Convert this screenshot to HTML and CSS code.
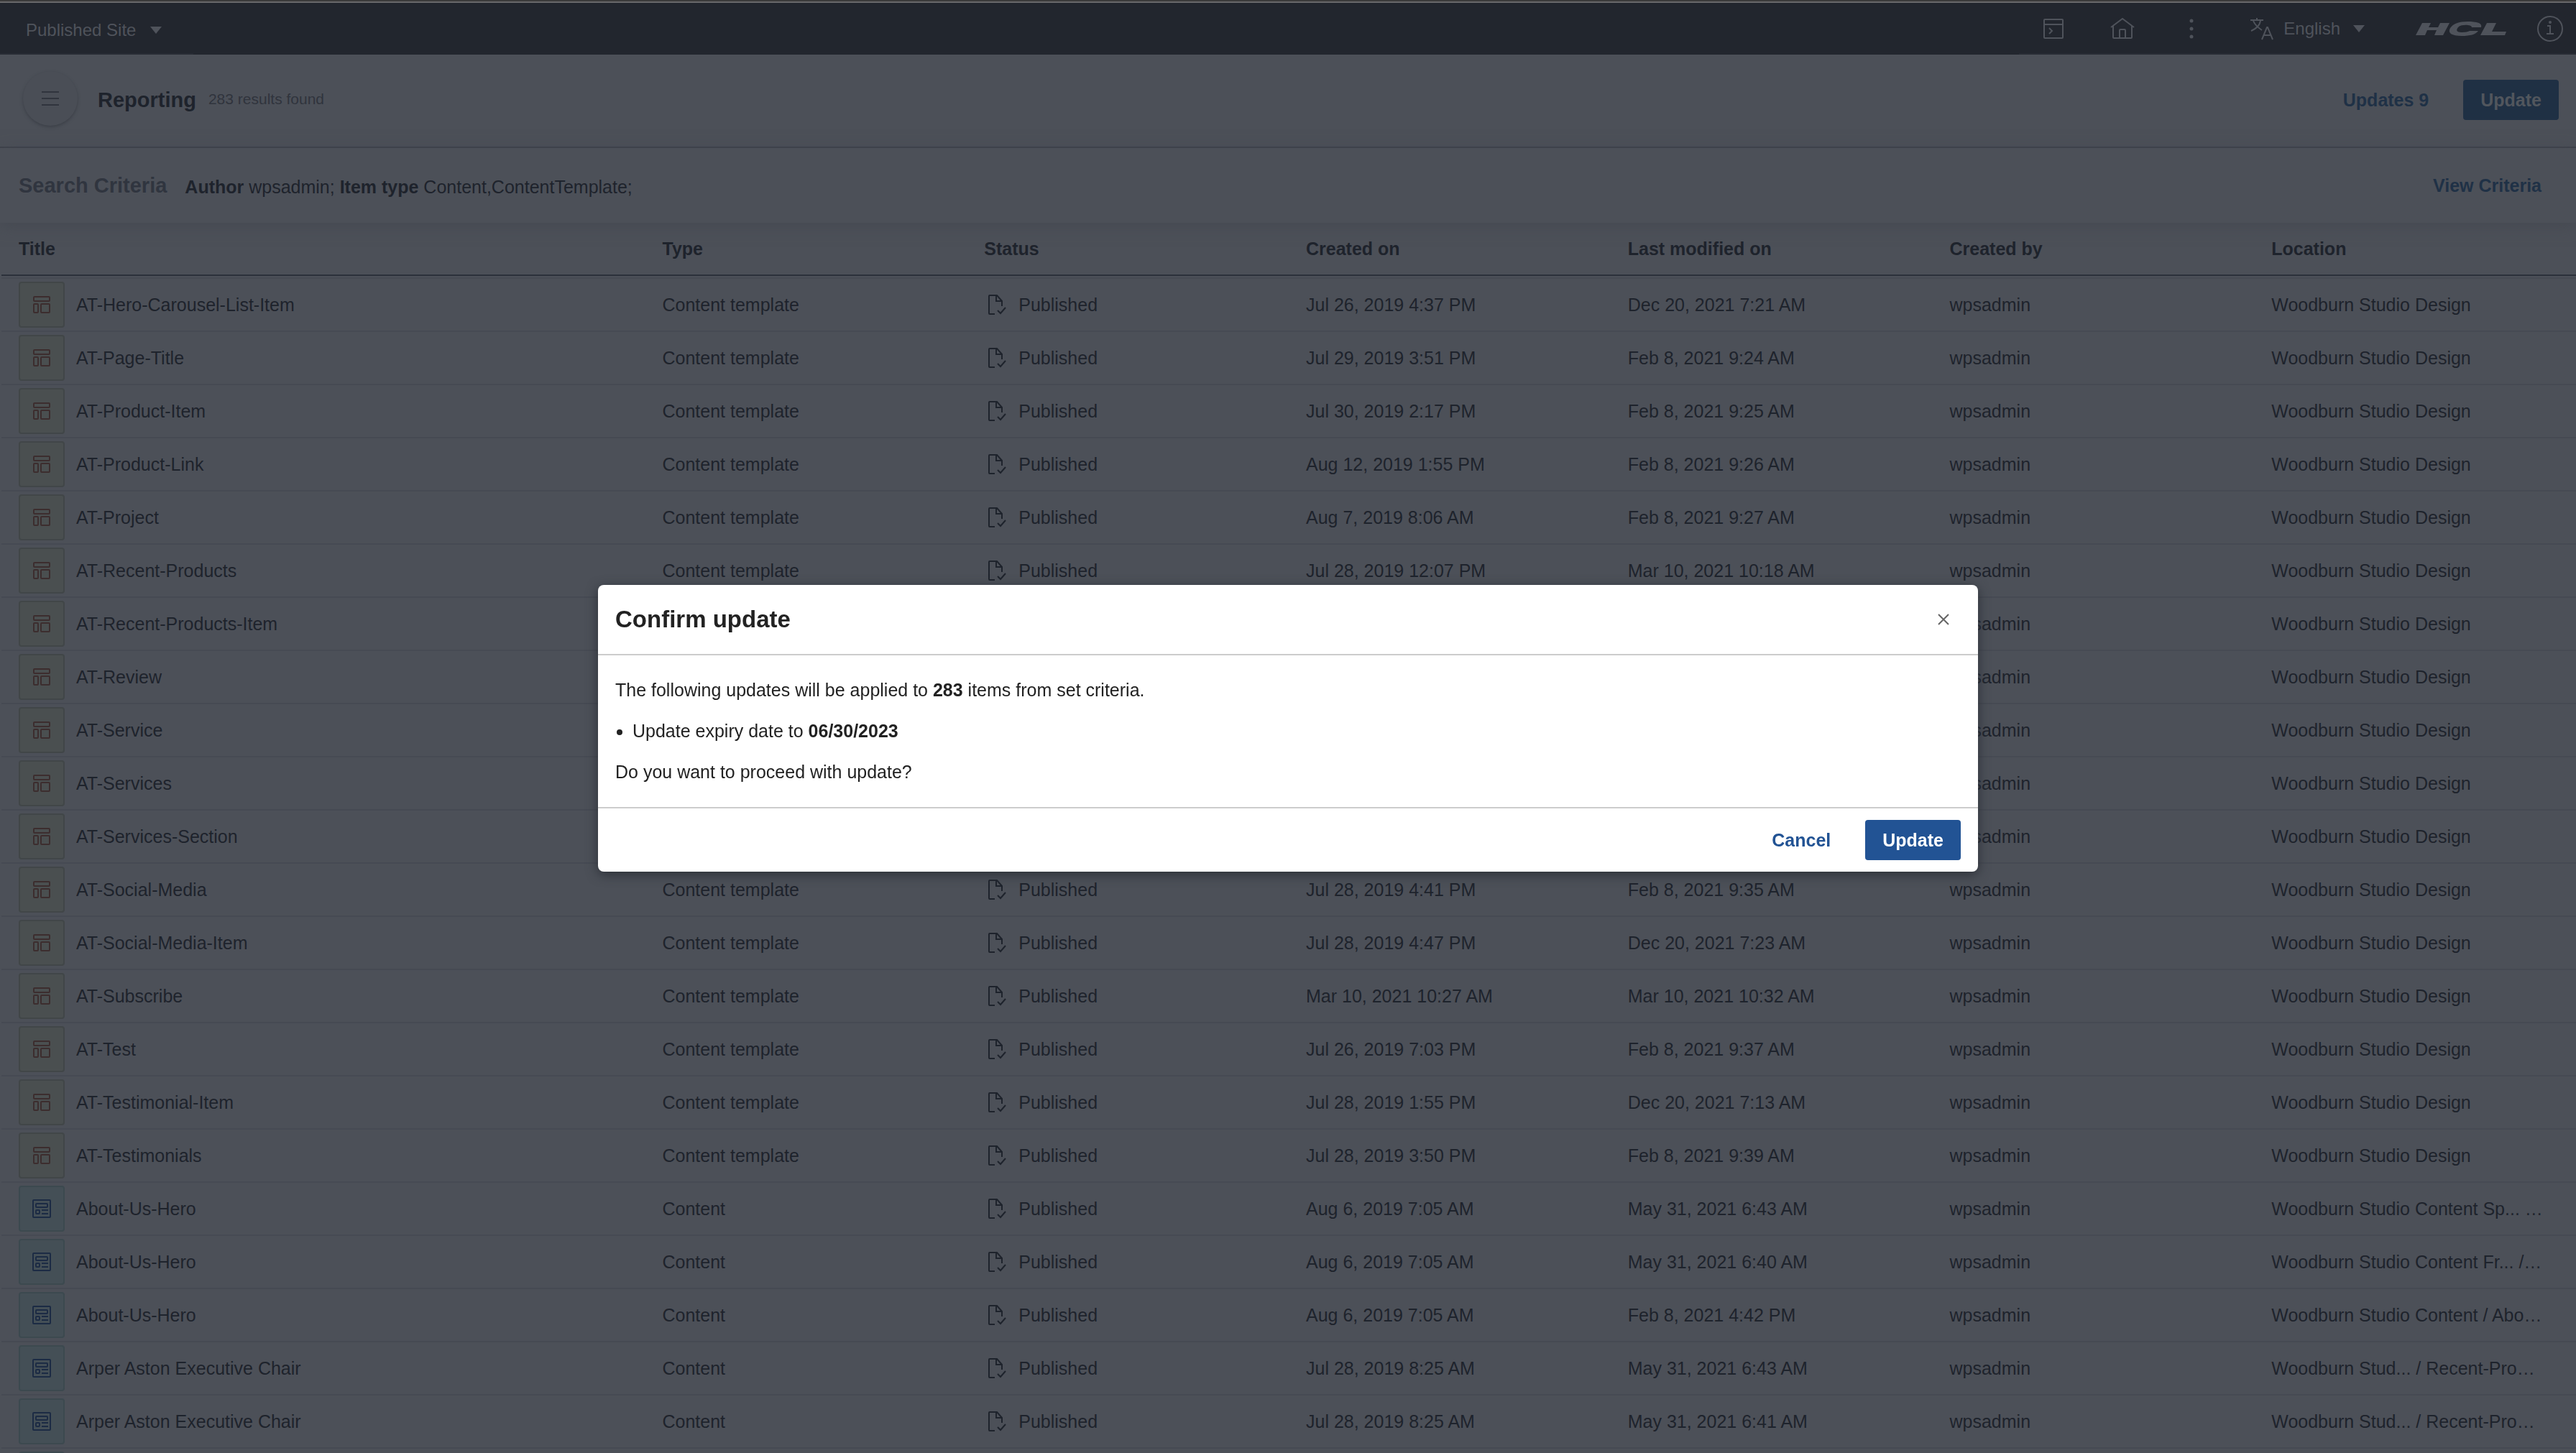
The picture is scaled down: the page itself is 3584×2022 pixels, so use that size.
FILE: index.html
```html
<!DOCTYPE html>
<html lang="en">
<head>
<meta charset="utf-8">
<title>Reporting</title>
<link rel="stylesheet" href="styles.css">
</head>
<body>
<svg class="sprite" aria-hidden="true">
  <symbol id="i-template" viewBox="0 0 24 24"><g fill="none" stroke="currentColor" stroke-width="2"><rect x="1" y="1" width="22" height="6" rx="1"/><rect x="1" y="11" width="6" height="12" rx="1"/><rect x="11" y="11" width="12" height="12" rx="1"/></g></symbol>
  <symbol id="i-content" viewBox="0 0 26 26"><g fill="none" stroke="currentColor" stroke-width="2"><rect x="1" y="1" width="24" height="24" rx="1"/><rect x="5" y="6" width="16" height="5" rx="1"/><rect x="5" y="15" width="5" height="5" rx="1"/><path d="M13 15h9M13 20h9"/></g></symbol>
  <symbol id="i-published" viewBox="0 0 32 32"><g fill="none" stroke="currentColor" stroke-width="2"><path d="M15 29H8q-1 0-1-1V4q0-1 1-1h10l7 8v7M17 3v8h8"/><path d="M19 24l4 4 7-8"/></g></symbol>
</svg>
<header class="topbar">
  <button class="site" type="button">Published Site <span class="caret"></span></button>
  <nav class="tools">
    <button type="button" aria-label="Open console"><svg width="32" height="32" viewBox="0 0 32 32"><g fill="none" stroke="currentColor" stroke-width="2"><rect x="3" y="3" width="26" height="26" rx="1"/><path d="M3 10h26M10 15l4 4-4 4"/></g></svg></button>
    <a href="#" aria-label="Home"><svg width="36" height="32" viewBox="0 0 36 32"><g fill="none" stroke="currentColor" stroke-width="2"><path d="M2 14L18 2l16 12M5 12v16q0 1 1 1h24q1 0 1-1V12M14 29V18q0-1 1-1h6q1 0 1 1v11"/></g></svg></a>
    <button type="button" aria-label="More"><svg width="8" height="32" viewBox="0 0 8 32"><g fill="currentColor"><circle cx="4" cy="5" r="2.500"/><circle cx="4" cy="16" r="2.500"/><circle cx="4" cy="27" r="2.500"/></g></svg></button>
    <button class="language" type="button"><svg width="32" height="32" viewBox="0 0 32 32"><g fill="none" stroke="currentColor" stroke-width="2"><path d="M0 4h18M9 1v3M4 5c2 5 6 9 12 13M14 5c-1 6-6 11-13 14"/><path d="M16 31l7-17h1l7 17M18 25h11"/></g></svg>English <span class="caret"></span></button>
    <svg class="brand" role="img" aria-label="HCL" width="128" height="20" viewBox="0 0 128 20"><path fill="currentColor" d="M10 2h12l-3 6h13l3-6h13l-9 17H27l3-7H17l-3 7H1zM92 8H79c0-4-14-4-18-1-5 5-3 8 4 8 5 0 9-1 11-2h12c-4 5-11 7-23 7-14 0-20-4-16-11C53 3 61 0 73 0c13 0 21 2 19 8zM100 2h13l-6 12h20l-2 5H91z"/></svg>
    <button type="button" aria-label="Information"><svg width="36" height="36" viewBox="0 0 36 36"><g fill="none" stroke="currentColor" stroke-width="2"><circle cx="18" cy="18" r="17"/><path d="M14 14h4v11M13 25h10"/></g><circle cx="18" cy="9" r="2" fill="currentColor"/></svg></button>
  </nav>
</header>
<main>
  <section class="heading">
    <button class="menu" type="button" aria-label="Menu"><svg width="24" height="20" viewBox="0 0 24 20"><path fill="none" stroke="currentColor" stroke-width="2" d="M0 1h24M0 10h24M0 19h24"/></svg></button>
    <h1>Reporting</h1>
    <span class="count">283 results found</span>
    <div class="actions"><button class="link" type="button">Updates 9</button><button class="primary muted" type="button">Update</button></div>
  </section>
  <section class="criteria">
    <h2>Search Criteria</h2>
    <p><b>Author</b> wpsadmin; <b>Item type</b> Content,ContentTemplate;</p>
    <button class="link" type="button">View Criteria</button>
  </section>
  <table>
    <colgroup><col class="wide"><col span="6"></colgroup>
    <thead><tr><th>Title</th><th>Type</th><th>Status</th><th>Created on</th><th>Last modified on</th><th>Created by</th><th>Location</th></tr></thead>
    <tbody id="rows"></tbody>
  </table>
</main>
<div class="overlay">
  <section class="dialog" role="dialog" aria-modal="true" aria-labelledby="dialog-title">
    <header><h2 id="dialog-title">Confirm update</h2><button type="button" aria-label="Close"><svg width="16" height="16" viewBox="0 0 16 16"><path fill="none" stroke="currentColor" stroke-width="2" d="M1 1l14 14M15 1L1 15"/></svg></button></header>
    <div class="message">
      <p>The following updates will be applied to <b>283</b> items from set criteria.</p>
      <ul><li>Update expiry date to <b>06/30/2023</b></li></ul>
      <p>Do you want to proceed with update?</p>
    </div>
    <footer><button class="cancel" type="button">Cancel</button><button class="primary" type="button">Update</button></footer>
  </section>
</div>
<script src="rows.js"></script>
</body>
</html>
```
FILE: styles.css
```css
* { box-sizing: border-box; }
html, body { height: 100%; }
body {
  margin: 0;
  overflow: hidden;
  background: #4c5058;
  color: #1e232c;
  font: 25px/32px "Liberation Sans", Arial, sans-serif;
}
button { padding: 0; border: 0; background: none; color: inherit; font: inherit; }
h1, h2, p, ul { margin: 0; }
svg { display: block; flex: none; }
.sprite { position: absolute; width: 0; height: 0; }

.topbar {
  display: flex;
  justify-content: space-between;
  height: 76px;
  border-top: 2px solid #3b3b3b;
  background: #22262e;
  box-shadow: inset 0 2px #68686a;
  color: #4f535b;
  font-size: 24px;
}
.site { display: flex; align-items: center; gap: 20px; padding: 8px 44px 0 36px; border-bottom: 2px solid #282c35; }
.caret { border: 8px solid transparent; border-top: 10px solid currentColor; border-bottom: 0; }
.tools { display: flex; align-items: center; padding: 4px 18px 0 32px; border-bottom: 2px solid #282c35; }
.tools a { margin: 0 74px 0 62px; color: inherit; }
.language { display: flex; align-items: center; gap: 14px; margin-left: 78px; }
.language .caret { margin-left: 4px; }
.brand { margin: 0 42px 0 70px; }

.heading { display: flex; align-items: center; height: 130px; padding: 0 24px 6px 32px; border-bottom: 2px solid #3c4049; }
.menu {
  display: grid;
  place-items: center;
  width: 76px;
  height: 76px;
  border-radius: 50%;
  background: #4a4e56;
  box-shadow: 0 2px 4px #3c4048;
  color: #30343d;
}
h1 { margin: 4px 0 0 28px; font-size: 29px; }
.count { margin: 2px 0 0 17px; color: #30343d; font-size: 21px; }
.actions { display: flex; align-items: center; gap: 48px; margin-left: auto; padding-top: 4px; }
.link { color: #1f3146; font-weight: bold; }
.primary { height: 56px; padding: 0 24px; border-radius: 4px; background: #225394; color: #fff; font-weight: bold; }
.muted { background: #1f3044; color: #51565d; }

.criteria { display: flex; align-items: center; height: 104px; padding: 0 48px 0 26px; box-shadow: 0 4px 20px #454951; }
.criteria h2 { color: #30353f; font-size: 29px; }
.criteria p { margin: 4px 0 0 25px; }
.criteria .link { margin-left: auto; }

table { width: calc(100% - 2px); margin-left: 2px; border-spacing: 0; table-layout: fixed; }
.wide { width: 25%; }
th, td { padding: 0 24px; text-align: left; white-space: nowrap; }
th { height: 78px; padding-bottom: 4px; border-bottom: 2px solid #464a53; background: linear-gradient(#2c313b, #2c313b) 0 72px / 100% 2px no-repeat; }
td { height: 74px; border-bottom: 2px solid #464a53; }
td:last-child { padding-right: 0; }
.item, .status { display: flex; align-items: center; }
.item, .status { gap: 16px; }
.tile { display: grid; place-items: center; width: 64px; height: 64px; border: 2px solid #414648; border-radius: 4px; background: #4a4f50; color: #3c2d2e; }
.tile.content { border-color: #3c494f; background: #444f56; color: #1c2b44; }

.overlay { position: fixed; inset: 0; display: grid; place-items: center; padding-top: 4px; }
.dialog { width: 1920px; max-width: 90%; border-radius: 8px; background: #fff; box-shadow: 0 4px 16px #2c3037; color: #222; }
.dialog header { display: flex; align-items: center; justify-content: space-between; height: 98px; padding: 0 40px 0 24px; border-bottom: 2px solid #ccc; color: #666; }
.dialog h2 { color: #222; font-size: 33px; }
.message { display: grid; gap: 25px; padding: 32px 24px 33px; }
.message ul { padding-left: 24px; }
.dialog footer { display: flex; align-items: center; justify-content: flex-end; gap: 48px; height: 90px; padding: 0 24px; border-top: 2px solid #ccc; }
.cancel { color: #225394; font-weight: bold; }
```
FILE: rows.js
```js
const design = "Woodburn Studio Design";
const items = [
  ["AT-Hero-Carousel-List-Item", "Jul 26, 2019 4:37 PM", "Dec 20, 2021 7:21 AM", design],
  ["AT-Page-Title", "Jul 29, 2019 3:51 PM", "Feb 8, 2021 9:24 AM", design],
  ["AT-Product-Item", "Jul 30, 2019 2:17 PM", "Feb 8, 2021 9:25 AM", design],
  ["AT-Product-Link", "Aug 12, 2019 1:55 PM", "Feb 8, 2021 9:26 AM", design],
  ["AT-Project", "Aug 7, 2019 8:06 AM", "Feb 8, 2021 9:27 AM", design],
  ["AT-Recent-Products", "Jul 28, 2019 12:07 PM", "Mar 10, 2021 10:18 AM", design],
  ["AT-Recent-Products-Item", "", "", design],
  ["AT-Review", "", "", design],
  ["AT-Service", "", "", design],
  ["AT-Services", "", "", design],
  ["AT-Services-Section", "", "", design],
  ["AT-Social-Media", "Jul 28, 2019 4:41 PM", "Feb 8, 2021 9:35 AM", design],
  ["AT-Social-Media-Item", "Jul 28, 2019 4:47 PM", "Dec 20, 2021 7:23 AM", design],
  ["AT-Subscribe", "Mar 10, 2021 10:27 AM", "Mar 10, 2021 10:32 AM", design],
  ["AT-Test", "Jul 26, 2019 7:03 PM", "Feb 8, 2021 9:37 AM", design],
  ["AT-Testimonial-Item", "Jul 28, 2019 1:55 PM", "Dec 20, 2021 7:13 AM", design],
  ["AT-Testimonials", "Jul 28, 2019 3:50 PM", "Feb 8, 2021 9:39 AM", design],
  ["About-Us-Hero", "Aug 6, 2019 7:05 AM", "May 31, 2021 6:43 AM", "Woodburn Studio Content Sp... …"],
  ["About-Us-Hero", "Aug 6, 2019 7:05 AM", "May 31, 2021 6:40 AM", "Woodburn Studio Content Fr... /…"],
  ["About-Us-Hero", "Aug 6, 2019 7:05 AM", "Feb 8, 2021 4:42 PM", "Woodburn Studio Content / Abo…"],
  ["Arper Aston Executive Chair", "Jul 28, 2019 8:25 AM", "May 31, 2021 6:43 AM", "Woodburn Stud... / Recent-Pro…"],
  ["Arper Aston Executive Chair", "Jul 28, 2019 8:25 AM", "May 31, 2021 6:41 AM", "Woodburn Stud... / Recent-Pro…"],
  ["", "", "", ""]
];
document.getElementById("rows").innerHTML = items.map(([title, created, modified, place]) => {
  const template = title.startsWith("AT-");
  const size = template ? 24 : 26;
  const tile = `<span class="tile ${template ? "" : "content"}"><svg width="${size}" height="${size}"><use href="#${template ? "i-template" : "i-content"}"/></svg></span>`;
  if (!title) return `<tr><td><div class="item">${tile}</div></td><td colspan="6"></td></tr>`;
  const type = template ? "Content template" : "Content";
  const status = `<div class="status"><svg width="32" height="32"><use href="#i-published"/></svg>Published</div>`;
  return `<tr><td><div class="item">${tile}${title}</div></td><td>${created && type}</td><td>${created && status}</td>
    <td>${created}</td><td>${modified}</td><td>wpsadmin</td><td>${place}</td></tr>`;
}).join("");
```
